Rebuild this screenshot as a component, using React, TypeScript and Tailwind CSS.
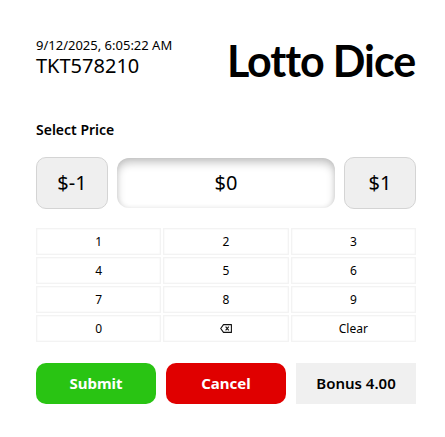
import { useState } from 'react';

const KEYS = ['1', '2', '3', '4', '5', '6', '7', '8', '9', '0', 'back', 'Clear'];

function BackspaceIcon() {
  return (
    <svg width="12" height="9" viewBox="0 0 12 9" fill="none" stroke="#111" strokeWidth="1.1">
      <path d="M3.5 0.6 H11.4 V8.4 H3.5 L0.7 4.5 Z" strokeLinejoin="round" />
      <path d="M5.6 2.6 L8.8 6.4 M8.8 2.6 L5.6 6.4" />
    </svg>
  );
}

export default function App() {
  const [price, setPrice] = useState(0);
  const [ticket] = useState('TKT578210');

  const press = (k: string) => {
    if (k === 'Clear') return setPrice(0);
    if (k === 'back') return setPrice(Math.floor(price / 10));
    setPrice(price * 10 + Number(k));
  };

  return (
    <div className="min-h-[437px] w-[445px] bg-white text-black font-['Noto_Sans','Open_Sans',sans-serif]">
      <div className="ml-[36px] w-[380px] pt-[37px]">
        {/* Header */}
        <div className="flex items-end justify-between">
          <div className="flex flex-col pb-[1px]">
            <span className="text-[13px] leading-[16px]">9/12/2025, 6:05:22 AM</span>
            <span className="text-[20px] leading-[26px]">{ticket}</span>
          </div>
          <h1 className="-mb-[3px] pr-[1px] font-['Lato',sans-serif] text-[43px] font-bold leading-[44px] tracking-[-1.1px]">
            Lotto Dice
          </h1>
        </div>

        {/* Price selector */}
        <div className="mt-[40px] text-[14px] font-semibold leading-[20px]">Select Price</div>
        <div className="mt-[17px] flex items-center gap-[9px]">
          <button
            onClick={() => setPrice(price - 1)}
            className="h-[52px] w-[72px] rounded-[10px] border border-[#d4d4d4] bg-[#efefef] text-[20px]"
          >
            $-1
          </button>
          <div className="flex h-[50px] flex-1 items-center justify-center rounded-[12px] bg-white text-[20px] shadow-[inset_0_5px_8px_rgba(0,0,0,0.22),inset_0_0_5px_rgba(0,0,0,0.08)]">
            ${price}
          </div>
          <button
            onClick={() => setPrice(price + 1)}
            className="h-[52px] w-[72px] rounded-[10px] border border-[#d4d4d4] bg-[#efefef] text-[20px]"
          >
            $1
          </button>
        </div>

        {/* Keypad */}
        <div className="mt-[19px] grid grid-cols-3 gap-[2px]">
          {KEYS.map((k) => (
            <button
              key={k}
              onClick={() => press(k)}
              className="flex h-[27px] items-center justify-center border border-[#f3f3f3] bg-white text-[12px] shadow-[inset_0_0_2px_#f0f0f0]"
            >
              {k === 'back' ? <BackspaceIcon /> : k}
            </button>
          ))}
        </div>

        {/* Actions */}
        <div className="mt-[21px] flex gap-[10px]">
          <button className="h-[41px] flex-1 rounded-[10px] bg-[#29c413] text-[15px] font-bold text-white">Submit</button>
          <button className="h-[41px] flex-1 rounded-[10px] bg-[#e00000] text-[15px] font-bold text-white">Cancel</button>
          <div className="flex h-[41px] flex-1 items-center justify-center bg-[#f0f0f0] text-[15px] font-semibold">
            Bonus 4.00
          </div>
        </div>
      </div>
    </div>
  );
}
